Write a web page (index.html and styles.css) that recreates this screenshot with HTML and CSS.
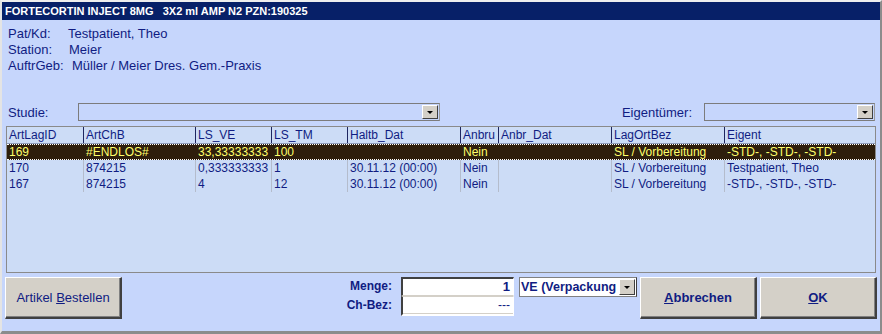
FILE: index.html
```html
<!DOCTYPE html>
<html lang="de">
<head>
<meta charset="utf-8">
<title>Fortecortin</title>
<link rel="stylesheet" href="styles.css">
</head>
<body>
<div class="win">
  <div class="title">FORTECORTIN INJECT 8MG   3X2 ml AMP N2 PZN:190325</div>
  <div class="main">
    <div class="info">
      <div class="irow"><span class="lbl">Pat/Kd:</span><span class="val">Testpatient, Theo</span></div>
      <div class="irow"><span class="lbl">Station:</span><span class="val v2">Meier</span></div>
      <div class="irow"><span class="lbl">AuftrGeb:</span><span class="val v3">Müller / Meier Dres. Gem.-Praxis</span></div>
    </div>

    <div class="filters">
      <span class="flbl">Studie:</span>
      <div class="combo studie"><div class="cbtn"><i class="arrow"></i></div></div>
      <span class="flbl eig">Eigentümer:</span>
      <div class="combo eigc"><div class="cbtn"><i class="arrow"></i></div></div>
    </div>

    <div class="grid">
      <div class="row head">
        <div class="c">ArtLagID</div><div class="c">ArtChB</div><div class="c">LS_VE</div><div class="c">LS_TM</div><div class="c">Haltb_Dat</div><div class="c">Anbru</div><div class="c">Anbr_Dat</div><div class="c">LagOrtBez</div><div class="c">Eigent</div>
      </div>
      <div class="row sel">
        <div class="c">169</div><div class="c">#ENDLOS#</div><div class="c">33,33333333</div><div class="c">100</div><div class="c"></div><div class="c">Nein</div><div class="c"></div><div class="c">SL / Vorbereitung</div><div class="c">-STD-, -STD-, -STD-</div>
      </div>
      <div class="row">
        <div class="c">170</div><div class="c">874215</div><div class="c">0,333333333</div><div class="c">1</div><div class="c">30.11.12 (00:00)</div><div class="c">Nein</div><div class="c"></div><div class="c">SL / Vorbereitung</div><div class="c">Testpatient, Theo</div>
      </div>
      <div class="row">
        <div class="c">167</div><div class="c">874215</div><div class="c">4</div><div class="c">12</div><div class="c">30.11.12 (00:00)</div><div class="c">Nein</div><div class="c"></div><div class="c">SL / Vorbereitung</div><div class="c">-STD-, -STD-, -STD-</div>
      </div>
    </div>

    <div class="bottom">
      <button class="btn order">Artikel <u>B</u>estellen</button>
      <div class="qty">
        <div class="qlbls">
          <div class="qlbl">Menge:</div>
          <div class="qlbl">Ch-Bez:</div>
        </div>
        <div class="qinputs">
          <div class="inp menge">1</div>
          <div class="inp chbez">---</div>
        </div>
      </div>
      <div class="unit"><span class="utext">VE (Verpackung</span><div class="cbtn"><i class="arrow"></i></div></div>
      <button class="btn bold cancel"><u>A</u>bbrechen</button>
      <button class="btn bold ok"><u>O</u>K</button>
    </div>
  </div>
</div>
</body>
</html>
```

FILE: styles.css
```css
html, body {
  margin: 0;
  padding: 0;
  background: #c6d6fc;
}

.win {
  box-sizing: border-box;
  width: 882px;
  height: 334px;
  display: flex;
  flex-direction: column;
  background: #c6d6fc;
  border-top: 2px solid #eeeeee;
  border-left: 2px solid #e4e4e4;
  border-right: 2px solid #8c8c8c;
  border-bottom: 3px solid #8c8c8c;
  font-family: "Liberation Sans", Arial, sans-serif;
  font-size: 13px;
  color: #101c82;
}

.title {
  height: 18px;
  line-height: 18px;
  background: #072068;
  color: #ffffff;
  font-weight: bold;
  font-size: 11px;
  padding-left: 3px;
  white-space: pre;
}

.main {
  flex: 1;
  display: flex;
  flex-direction: column;
}

.info {
  padding: 6px 0 0 6px;
}

.irow {
  height: 16px;
  line-height: 16px;
  display: flex;
}

.lbl {
  width: 60px;
  flex: none;
}

.val.v2 { padding-left: 1px; }
.val.v3 { padding-left: 4px; }

.filters {
  margin-top: 29px;
  height: 18px;
  display: flex;
  align-items: center;
  padding-left: 6px;
}

.flbl {
  width: 70px;
  flex: none;
}

.flbl.eig {
  width: auto;
  margin-left: auto;
  margin-right: 12px;
}

.combo {
  box-sizing: border-box;
  height: 18px;
  border: 1px solid #7c7c7c;
  border-right-color: #9a9a9a;
  display: flex;
  justify-content: flex-end;
  align-items: stretch;
  padding: 1px;
}

.combo.studie { width: 362px; }
.combo.eigc { width: 171px; margin-right: 5px; }

.cbtn {
  box-sizing: border-box;
  width: 16px;
  background: #d4d0c8;
  border-top: 1px solid #ffffff;
  border-left: 1px solid #ffffff;
  border-right: 1px solid #404040;
  border-bottom: 1px solid #404040;
  display: flex;
  align-items: center;
  justify-content: center;
}

.arrow {
  width: 0;
  height: 0;
  border-left: 3px solid transparent;
  border-right: 3px solid transparent;
  border-top: 3px solid #000000;
}

.grid {
  box-sizing: border-box;
  margin: 5px 4px 0 4px;
  height: 147px;
  background: #ccdcf6;
  border: 1px solid #8a8a8a;
  overflow: hidden;
  font-size: 12px;
}

.row {
  display: grid;
  grid-template-columns: 76px 112px 76px 76px 113px 38px 113px 113px 1fr;
  height: 16px;
  line-height: 16px;
}

.c {
  overflow: hidden;
  white-space: nowrap;
  padding-left: 2px;
  border-left: 1px solid #b4bccc;
}

.c:first-child {
  border-left: none;
  padding-left: 2px;
}

.row.head {
  height: 16px;
  border-bottom: 1px solid #8e9ab8;
}

.row.head .c {
  border-left-color: #1e2660;
}

.row.sel {
  box-sizing: border-box;
  background: #2e1e0c;
  color: #ffff6c;
  border-top: 1px dotted #ffffff;
  border-bottom: 1px dotted #ffffff;
  line-height: 14px;
}

.row.sel .c {
  border-left-color: #2e1e0c;
}

.bottom {
  flex: 1;
  display: flex;
  align-items: flex-start;
  padding: 4px 3px 0 3px;
}

.btn {
  box-sizing: border-box;
  height: 42px;
  background: #d4d0c8;
  border-top: 1px solid #ffffff;
  border-left: 1px solid #ffffff;
  border-right: 2px solid #404040;
  border-bottom: 2px solid #404040;
  box-shadow: inset -1px -1px 0 #808080;
  font-family: "Liberation Sans", Arial, sans-serif;
  font-size: 13px;
  color: #101c82;
  padding: 0;
}

.btn.order { width: 117px; }
.btn.bold { font-weight: bold; }
.btn.cancel { width: 117px; margin-left: 3px; }
.btn.ok { width: 117px; margin-left: 3px; }

.qty {
  margin-left: auto;
  display: flex;
}

.qlbls {
  display: flex;
  flex-direction: column;
  align-items: flex-end;
  font-weight: bold;
  font-size: 12px;
  padding-right: 9px;
}

.qlbl {
  height: 19px;
  line-height: 19px;
}

.qinputs {
  display: flex;
  flex-direction: column;
  width: 113px;
  font-size: 12px;
}

.inp {
  box-sizing: border-box;
  background: #ffffff;
  text-align: right;
  padding-right: 3px;
  color: #101c82;
}

.inp.menge {
  height: 19px;
  line-height: 15px;
  font-weight: bold;
  font-size: 13px;
  border-top: 2px solid #404040;
  border-left: 2px solid #404040;
  border-right: 1px solid #ffffff;
  border-bottom: 1px solid #d4d0c8;
}

.inp.chbez {
  height: 20px;
  line-height: 16px;
  border-top: 1px solid #d4d0c8;
  border-left: 2px solid #404040;
  border-right: 1px solid #ffffff;
  border-bottom: 2px solid #ffffff;
  box-shadow: inset 0 -1px 0 #d4d0c8;
}

.unit {
  box-sizing: border-box;
  margin-left: 5px;
  width: 118px;
  height: 20px;
  background: #ffffff;
  border: 1px solid #808080;
  border-right-color: #404040;
  display: flex;
  align-items: stretch;
  font-weight: bold;
  font-size: 12.5px;
  padding: 1px 1px 1px 0;
}

.utext {
  flex: 1;
  overflow: hidden;
  white-space: nowrap;
  line-height: 16px;
  padding-left: 1px;
}

.unit .cbtn {
  width: 16px;
  flex: none;
}
```
